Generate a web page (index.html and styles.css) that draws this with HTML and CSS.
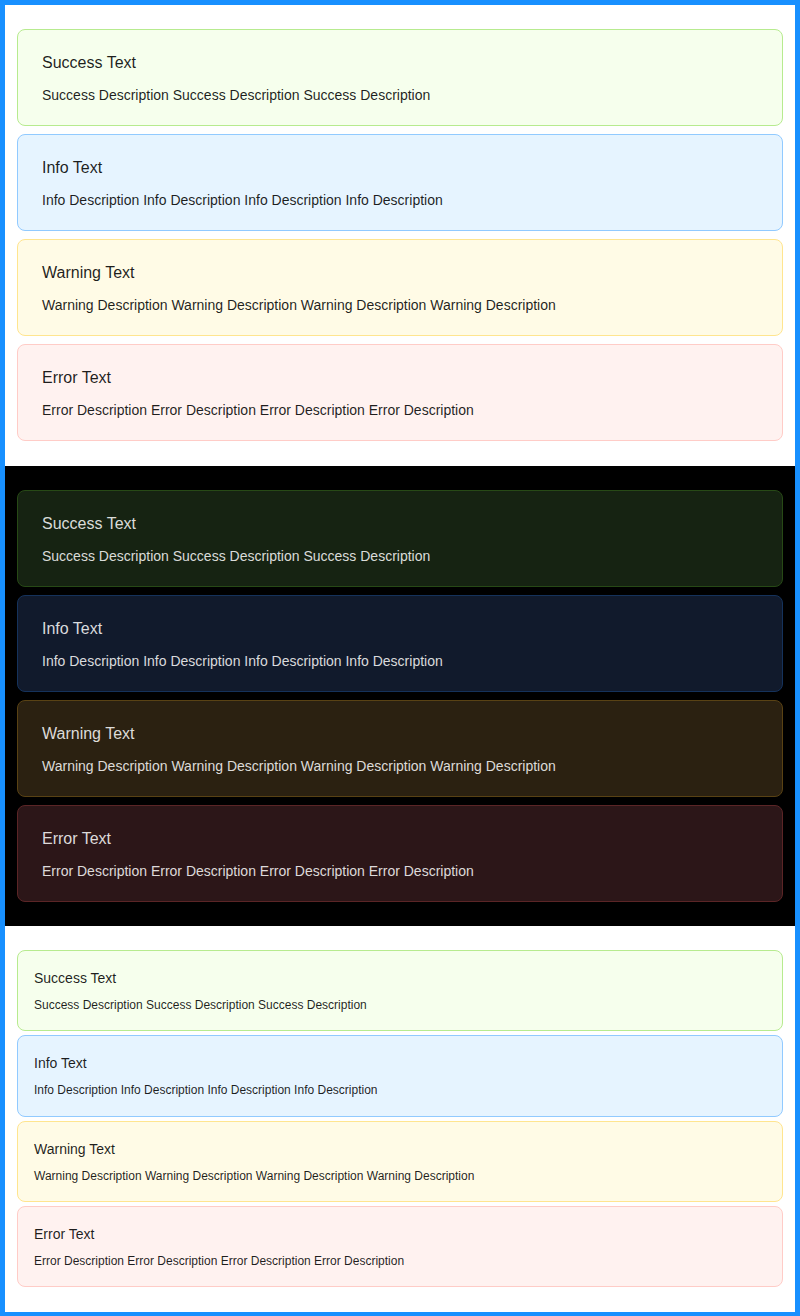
FILE: index.html
```html
<!DOCTYPE html>
<html>
<head>
<meta charset="utf-8">
<title>Alerts</title>
<link rel="stylesheet" href="styles.css">
</head>
<body>
<div class="frame">

	<!-- light theme -->
	<div class="section light">
		<div class="alert success">
			<div class="alert-title">Success Text</div>
			<div class="alert-desc">Success Description Success Description Success Description</div>
		</div>
		<div class="alert info">
			<div class="alert-title">Info Text</div>
			<div class="alert-desc">Info Description Info Description Info Description Info Description</div>
		</div>
		<div class="alert warning">
			<div class="alert-title">Warning Text</div>
			<div class="alert-desc">Warning Description Warning Description Warning Description Warning Description</div>
		</div>
		<div class="alert error">
			<div class="alert-title">Error Text</div>
			<div class="alert-desc">Error Description Error Description Error Description Error Description</div>
		</div>
	</div>

	<!-- dark theme -->
	<div class="section dark">
		<div class="alert success">
			<div class="alert-title">Success Text</div>
			<div class="alert-desc">Success Description Success Description Success Description</div>
		</div>
		<div class="alert info">
			<div class="alert-title">Info Text</div>
			<div class="alert-desc">Info Description Info Description Info Description Info Description</div>
		</div>
		<div class="alert warning">
			<div class="alert-title">Warning Text</div>
			<div class="alert-desc">Warning Description Warning Description Warning Description Warning Description</div>
		</div>
		<div class="alert error">
			<div class="alert-title">Error Text</div>
			<div class="alert-desc">Error Description Error Description Error Description Error Description</div>
		</div>
	</div>

	<!-- compact -->
	<div class="section light compact">
		<div class="alert success">
			<div class="alert-title">Success Text</div>
			<div class="alert-desc">Success Description Success Description Success Description</div>
		</div>
		<div class="alert info">
			<div class="alert-title">Info Text</div>
			<div class="alert-desc">Info Description Info Description Info Description Info Description</div>
		</div>
		<div class="alert warning">
			<div class="alert-title">Warning Text</div>
			<div class="alert-desc">Warning Description Warning Description Warning Description Warning Description</div>
		</div>
		<div class="alert error">
			<div class="alert-title">Error Text</div>
			<div class="alert-desc">Error Description Error Description Error Description Error Description</div>
		</div>
	</div>

</div>
</body>
</html>
```

FILE: styles.css
```css
html, body {
	margin: 0;
	padding: 0;
}
body {
	font-family: "Liberation Sans", Arial, sans-serif;
	background: #fff;
}
.frame {
	border: 5px solid #1890ff;
	min-height: 1306px;
	box-sizing: border-box;
}

.section {
	display: flex;
	flex-direction: column;
	gap: 8px;
	padding: 24px 12px;
}
.section.light {
	background: #fff;
	padding-bottom: 25px;
}
.section.dark {
	background: #000;
}

.alert {
	border: 1px solid;
	border-radius: 8px;
	padding: 21px 24px 19px;
	color: rgba(0, 0, 0, 0.88);
}
.alert-title {
	font-size: 16px;
	line-height: 24px;
	margin-bottom: 9px;
}
.alert-desc {
	font-size: 14px;
	line-height: 22px;
}

.light .success { background: #f6ffed; border-color: #b7eb8f; }
.light .info    { background: #e6f4ff; border-color: #91caff; }
.light .warning { background: #fffbe6; border-color: #ffe58f; }
.light .error   { background: #fff2f0; border-color: #ffccc7; }

.dark .alert { color: rgba(255, 255, 255, 0.85); }
.dark .success { background: #162312; border-color: #274916; }
.dark .info    { background: #111a2c; border-color: #15325b; }
.dark .warning { background: #2b2111; border-color: #594214; }
.dark .error   { background: #2c1618; border-color: #5b2526; }

.compact {
	gap: 4px;
}
.compact .alert {
	padding: 16px;
}
.compact .alert-title {
	font-size: 14px;
	line-height: 22px;
	margin-bottom: 7px;
}
.compact .alert-desc {
	font-size: 12px;
	line-height: 18.33px;
}
```
